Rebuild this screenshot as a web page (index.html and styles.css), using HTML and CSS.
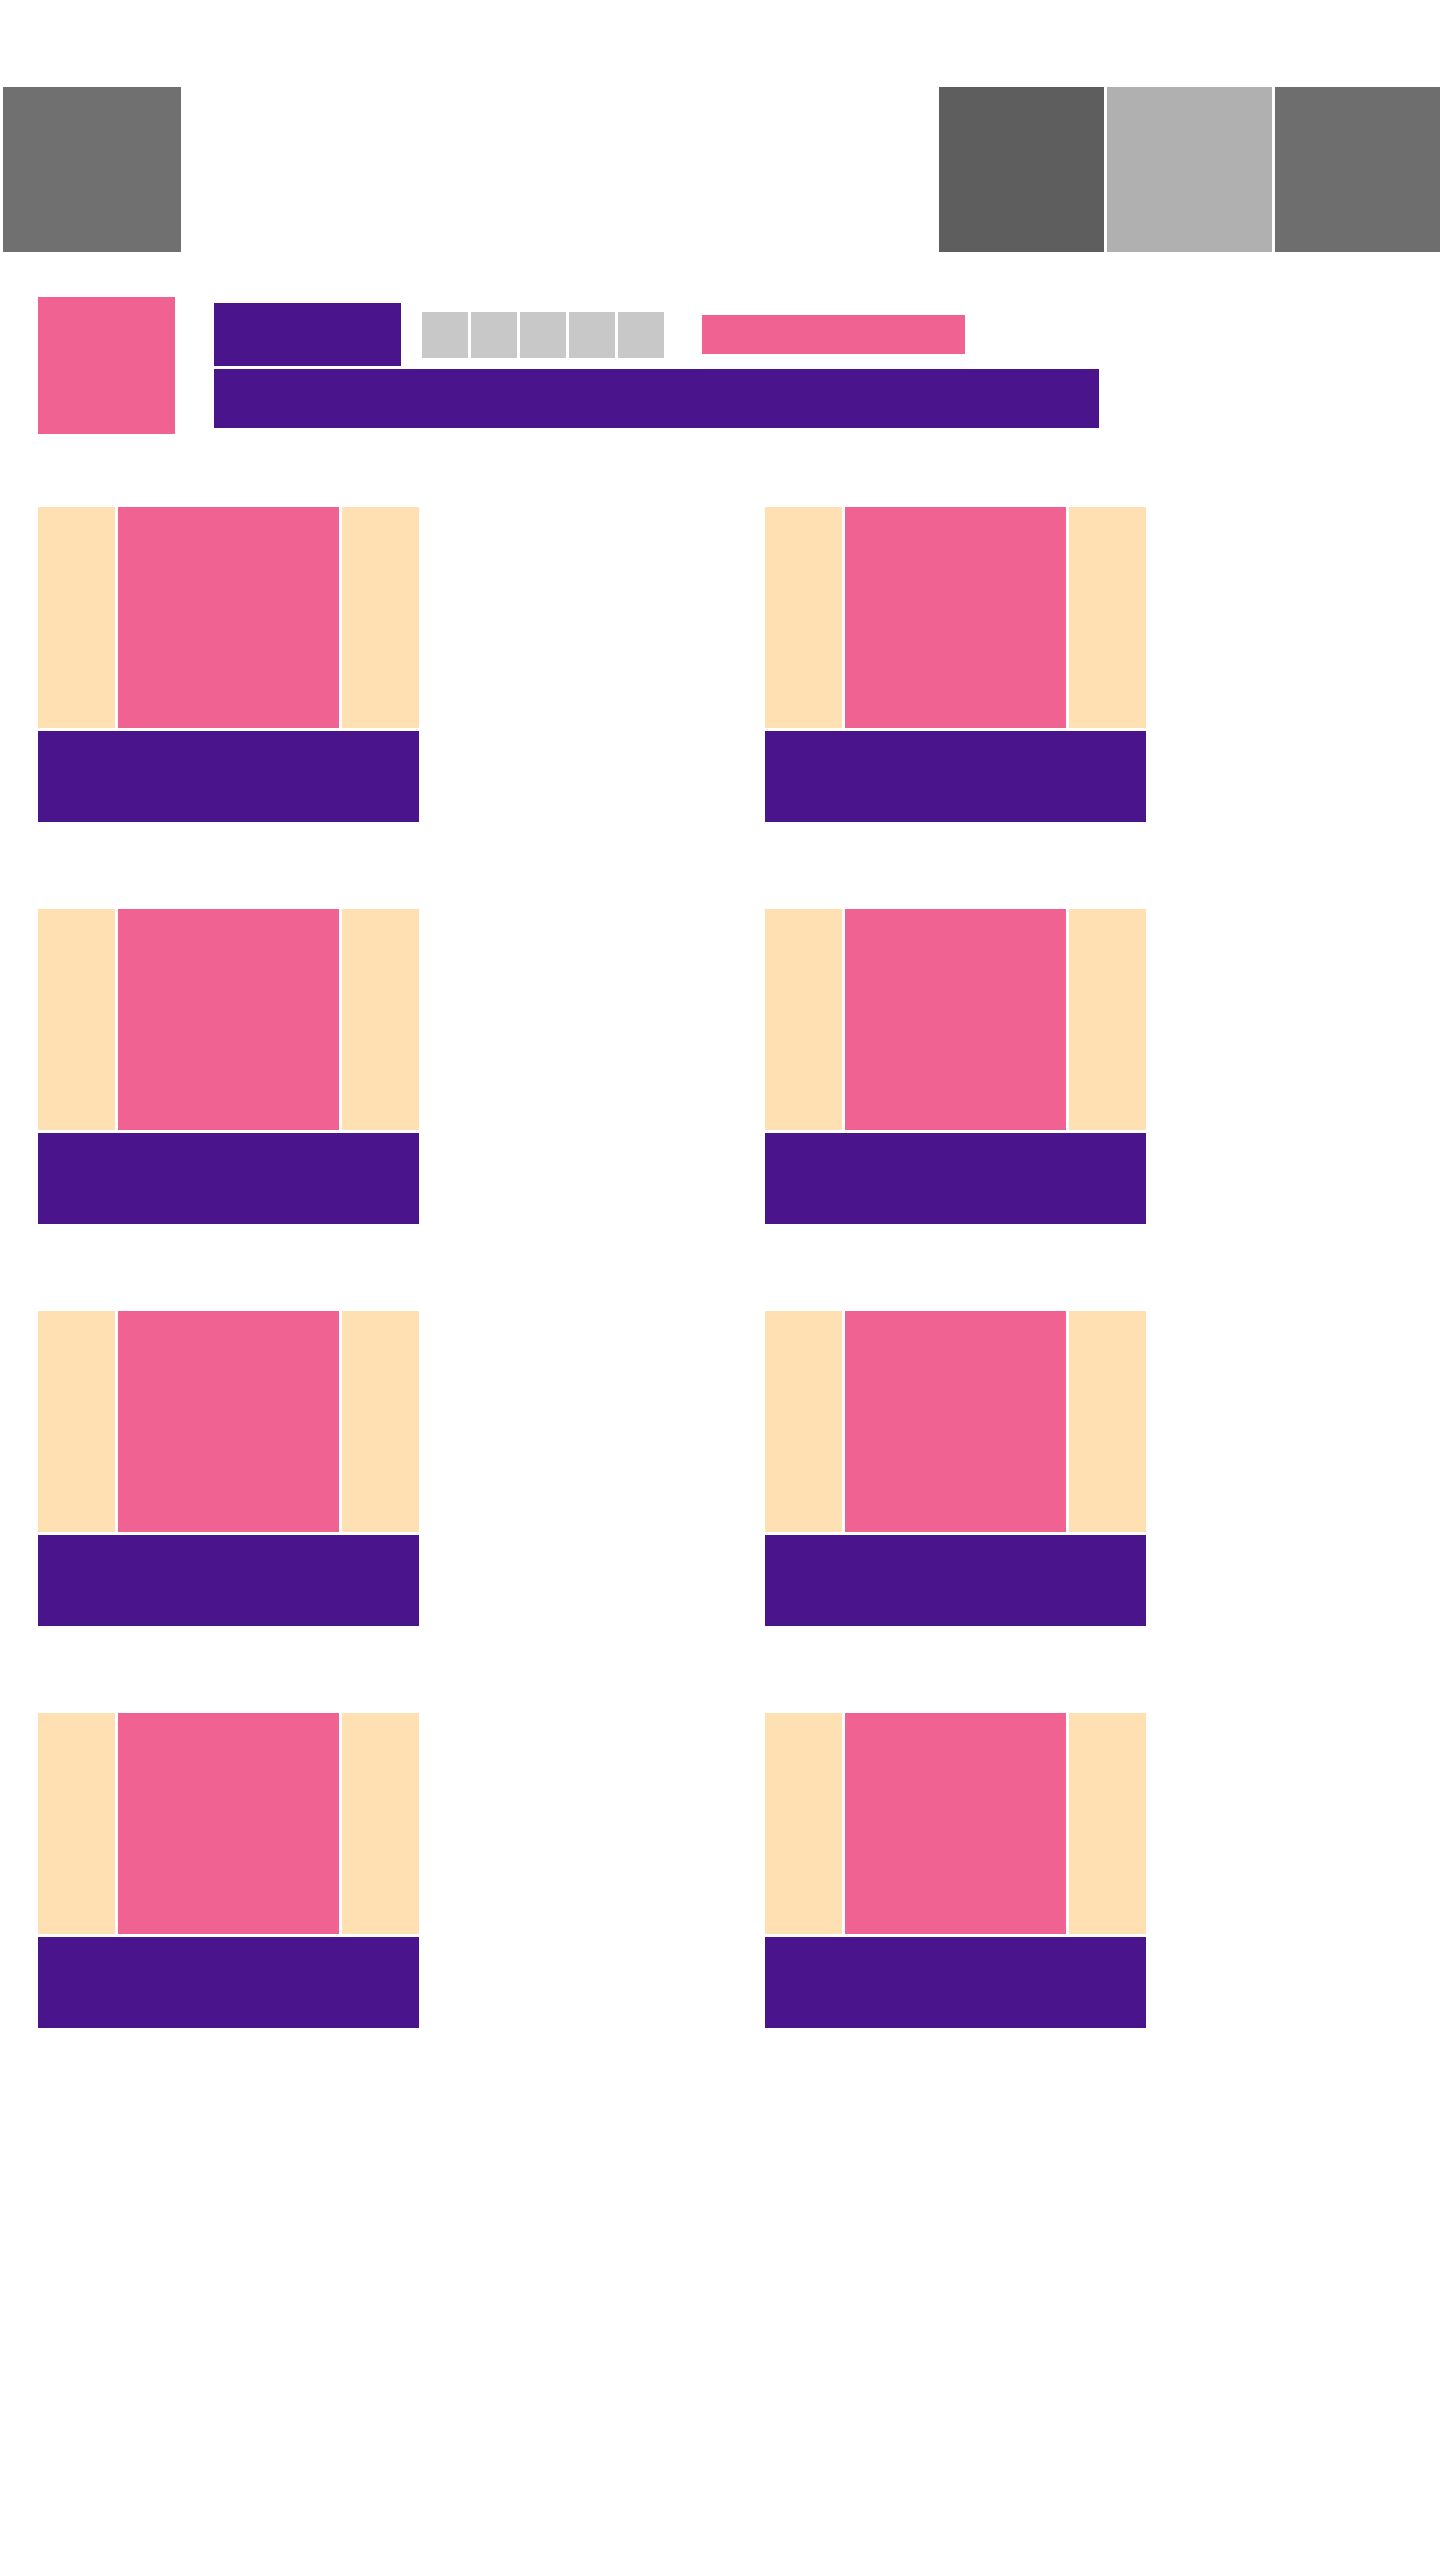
FILE: index.html
```html
<!DOCTYPE html>
<html lang="en">
<head>
<meta charset="utf-8">
<title>Layout</title>
<link rel="stylesheet" href="styles.css">
</head>
<body>
<header class="header">
  <div class="logo"></div>
  <nav class="nav">
    <div class="nav-item nav-dark"></div>
    <div class="nav-item nav-light"></div>
    <div class="nav-item nav-mid"></div>
  </nav>
</header>

<section class="profile">
  <div class="avatar"></div>
  <div class="info">
    <div class="info-top">
      <div class="title"></div>
      <div class="stars">
        <div class="star"></div>
        <div class="star"></div>
        <div class="star"></div>
        <div class="star"></div>
        <div class="star"></div>
      </div>
      <div class="badge"></div>
    </div>
    <div class="subtitle"></div>
  </div>
</section>

<main class="grid">
  <div class="card"><div class="side"></div><div class="media"></div><div class="side"></div><div class="caption"></div></div>
  <div class="card"><div class="side"></div><div class="media"></div><div class="side"></div><div class="caption"></div></div>
  <div class="card"><div class="side"></div><div class="media"></div><div class="side"></div><div class="caption"></div></div>
  <div class="card"><div class="side"></div><div class="media"></div><div class="side"></div><div class="caption"></div></div>
  <div class="card"><div class="side"></div><div class="media"></div><div class="side"></div><div class="caption"></div></div>
  <div class="card"><div class="side"></div><div class="media"></div><div class="side"></div><div class="caption"></div></div>
  <div class="card"><div class="side"></div><div class="media"></div><div class="side"></div><div class="caption"></div></div>
  <div class="card"><div class="side"></div><div class="media"></div><div class="side"></div><div class="caption"></div></div>
</main>
</body>
</html>
```

FILE: styles.css
```css
html, body {
  margin: 0;
  padding: 0;
  background: #ffffff;
  font-family: "Liberation Sans", Arial, sans-serif;
}

.header {
  display: flex;
  justify-content: space-between;
  align-items: flex-start;
  padding: 87px 0 0 3px;
}

.logo {
  width: 178px;
  height: 165px;
  background: #707070;
}

.nav {
  display: flex;
  gap: 3px;
}

.nav-item {
  width: 165px;
  height: 165px;
}

.nav-dark { background: #5e5e5e; }
.nav-light { background: #b0b0b0; }
.nav-mid { background: #6e6e6e; }

.profile {
  display: flex;
  align-items: flex-start;
  gap: 39px;
  margin: 45px 0 0 38px;
}

.avatar {
  width: 137px;
  height: 137px;
  background: #f06292;
  flex-shrink: 0;
}

.info {
  display: flex;
  flex-direction: column;
  gap: 3px;
  padding-top: 6px;
}

.info-top {
  display: flex;
  align-items: center;
  height: 63px;
}

.title {
  width: 187px;
  height: 63px;
  background: #4a148c;
}

.stars {
  display: flex;
  gap: 3px;
  margin-left: 21px;
}

.star {
  width: 46px;
  height: 46px;
  background: #c8c8c8;
}

.badge {
  width: 263px;
  height: 39px;
  margin-left: 38px;
  background: #f06292;
}

.subtitle {
  width: 885px;
  height: 59px;
  background: #4a148c;
}

.grid {
  display: grid;
  grid-template-columns: 381px 381px;
  column-gap: 346px;
  row-gap: 87px;
  margin: 73px 0 0 38px;
}

.card {
  display: grid;
  grid-template-columns: 77px 221px 77px;
  grid-template-rows: 221px 91px;
  gap: 3px;
}

.side { background: #ffe0b2; }
.media { background: #f06292; }

.caption {
  grid-column: 1 / -1;
  background: #4a148c;
}
```
